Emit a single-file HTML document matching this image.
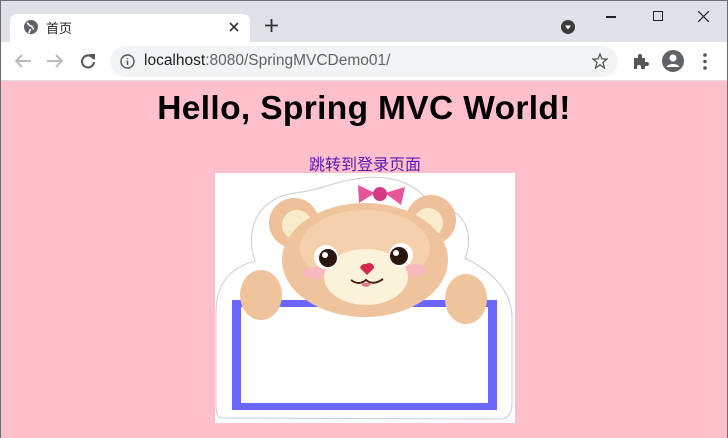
<!DOCTYPE html>
<html><head><meta charset="utf-8"><style>
*{margin:0;padding:0;box-sizing:border-box}
body{width:728px;height:438px;overflow:hidden;font-family:"Liberation Sans","Noto Sans CJK SC",sans-serif;background:#ffc0cb;position:relative}
.frame{position:absolute;inset:0;border:1px solid #6b6b6b;pointer-events:none;border-bottom:none}
.tabbar{position:absolute;left:0;top:0;width:728px;height:42px;background:#dee1e6}
.tab{position:absolute;left:10px;top:14px;width:240px;height:29px;background:#fff;border-radius:7px 7px 0 0}
.toolbar{position:absolute;left:0;top:42px;width:728px;height:39px;background:#fff;border-bottom:1px solid #ddd}
.url{position:absolute;left:110px;top:4px;width:508px;height:31px;background:#f1f3f4;border-radius:16px}
.t{position:absolute;white-space:nowrap}
h1{position:absolute;left:0;width:728px;top:90px;text-align:center;font-size:33.5px;font-weight:bold;color:#000;letter-spacing:0.35px}
a{position:absolute;left:309px;top:151px;font-size:16px;color:#5a1ab0;text-decoration:none;font-family:"Noto Sans CJK SC",sans-serif}
</style></head><body>
<div class="tabbar">
 <div class="tab">
  <svg class="t" style="left:13px;top:5px" width="16" height="16" viewBox="0 0 16 16"><circle cx="8" cy="8" r="7" fill="#5f6368"/><path d="M4 4c2 1 2 3 4 3s1 3 3 3M6 14c0-2 2-2 1-4" stroke="#fff" stroke-width="1.6" fill="none"/></svg>
  <span class="t" style="left:36px;top:4px;font-size:13px;color:#222;font-family:'Noto Sans CJK SC',sans-serif">首页</span>
  <svg class="t" style="left:219px;top:8px" width="10" height="10"><path d="M1 1L9 9M9 1L1 9" stroke="#333" stroke-width="1.6"/></svg>
 </div>
 <svg class="t" style="left:265px;top:19px" width="13" height="13"><path d="M6.5 0V13M0 6.5H13" stroke="#333" stroke-width="1.8"/></svg>
 <svg class="t" style="left:561px;top:20px" width="14" height="14"><circle cx="7" cy="7" r="7" fill="#3c3c3c"/><path d="M4 5.5H10L7 9.5Z" fill="#fff"/></svg>
 <div class="t" style="left:606px;top:16px;width:10px;height:1.5px;background:#222"></div>
 <div class="t" style="left:653px;top:11px;width:10px;height:10px;border:1.3px solid #222"></div>
 <svg class="t" style="left:698px;top:11px" width="11" height="11"><path d="M0 0L11 11M11 0L0 11" stroke="#222" stroke-width="1.2"/></svg>
</div>
<div class="toolbar">
 <svg class="t" style="left:14px;top:11px" width="18" height="16"><path d="M17 8H2M8 2L2 8L8 14" stroke="#bbb" stroke-width="2" fill="none"/></svg>
 <svg class="t" style="left:46px;top:11px" width="18" height="16"><path d="M1 8H16M10 2L16 8L10 14" stroke="#bbb" stroke-width="2" fill="none"/></svg>
 <svg class="t" style="left:80px;top:11px" width="16" height="16"><path d="M13.5 6A6 6 0 1 0 14 9" stroke="#555" stroke-width="2" fill="none"/><path d="M9 1H15V7Z" fill="#555"/></svg>
 <div class="url">
  <svg class="t" style="left:10px;top:8px" width="15" height="15"><circle cx="7.5" cy="7.5" r="6.5" stroke="#555" stroke-width="1.4" fill="none"/><path d="M7.5 6.5V11M7.5 4V5" stroke="#555" stroke-width="1.5"/></svg>
  <span class="t" style="left:34px;top:6px;font-size:15.5px;color:#202124">localhost<span style="color:#5f6368">:8080/SpringMVCDemo01/</span></span>
  <svg class="t" style="left:482px;top:7px" width="16" height="16" viewBox="0 0 16 16"><path d="M8 1L10 6H15L11 9.5L12.5 15L8 11.8L3.5 15L5 9.5L1 6H6Z" stroke="#555" stroke-width="1.3" fill="none"/></svg>
 </div>
 <svg class="t" style="left:632px;top:11px" width="17" height="17" viewBox="0 0 17 17"><path d="M2 5H6V3a2 2 0 0 1 4 0V5H13V9H15a2 2 0 0 1 0 4H13V16H9V14a2 2 0 0 0-4 0V16H2Z" fill="#555"/></svg>
 <svg class="t" style="left:662px;top:8px" width="22" height="22"><circle cx="11" cy="11" r="11" fill="#5f6368"/><circle cx="11" cy="8" r="3.5" fill="#fff"/><path d="M4.5 17c2-4 11-4 13 0" fill="#fff"/></svg>
 <svg class="t" style="left:703px;top:11px" width="4" height="17"><circle cx="2" cy="2" r="1.8" fill="#555"/><circle cx="2" cy="8.5" r="1.8" fill="#555"/><circle cx="2" cy="15" r="1.8" fill="#555"/></svg>
</div>
<h1>Hello, Spring MVC World!</h1>
<a>跳转到登录页面</a>
<svg class="t" style="left:215px;top:173px" width="300" height="250" viewBox="0 0 300 250">
 <rect width="300" height="250" fill="#fff"/>
 <path d="M8 245C2 245 1 240 1 230V140C1 110 15 95 40 88C30 60 40 25 80 20C105 17 115 10 140 6C175 0 200 10 215 30C250 35 260 60 250 85C280 100 297 120 297 145V230C297 242 292 246 285 246Z" fill="#fff" stroke="#ccc" stroke-width="1"/>
 <rect x="17" y="127" width="265" height="110" fill="#6a66ff"/>
 <rect x="26" y="134" width="247" height="96" fill="#fff"/>
 <circle cx="79" cy="50" r="25" fill="#eec09a"/><circle cx="82" cy="52" r="15" fill="#f8ebcc"/>
 <circle cx="216" cy="47" r="25" fill="#eec09a"/><circle cx="213" cy="50" r="15" fill="#f8ebcc"/>
 <ellipse cx="150" cy="87" rx="83" ry="57" fill="#efc39c"/>
 <ellipse cx="150" cy="75" rx="65" ry="38" fill="#f6d6b4" opacity=".7"/>
 <ellipse cx="100" cy="100" rx="12" ry="6" fill="#f8b8c0"/><ellipse cx="200" cy="97" rx="12" ry="6" fill="#f8b8c0"/>
 <ellipse cx="151" cy="104" rx="42" ry="28" fill="#fbf2da"/>
 <circle cx="111" cy="84" r="12" fill="#fff"/><circle cx="113" cy="85" r="9" fill="#2a1810"/><circle cx="110" cy="82" r="3" fill="#fff"/>
 <circle cx="186" cy="82" r="12" fill="#fff"/><circle cx="184" cy="83" r="9" fill="#2a1810"/><circle cx="181" cy="80" r="3" fill="#fff"/>
 <path d="M145 95a5 5 0 0 1 6-4a5 5 0 0 1 8 4l-7 7z" fill="#d22a4a"/>
 <path d="M136 107q8 6 15 0q7 6 17-1" stroke="#4a2510" stroke-width="2" fill="none"/>
 <path d="M145 110q6 8 12 0z" fill="#e07a90"/>
 <path d="M160 20l-17-8l1 18zM170 20l20-6l-4 18z" fill="#e8559a"/><circle cx="165" cy="21" r="7" fill="#d43b84"/>
 <ellipse cx="46" cy="122" rx="21" ry="25" fill="#efc39c"/>
 <ellipse cx="251" cy="126" rx="21" ry="25" fill="#efc39c"/>
</svg>
<div class="frame"></div>
</body></html>
